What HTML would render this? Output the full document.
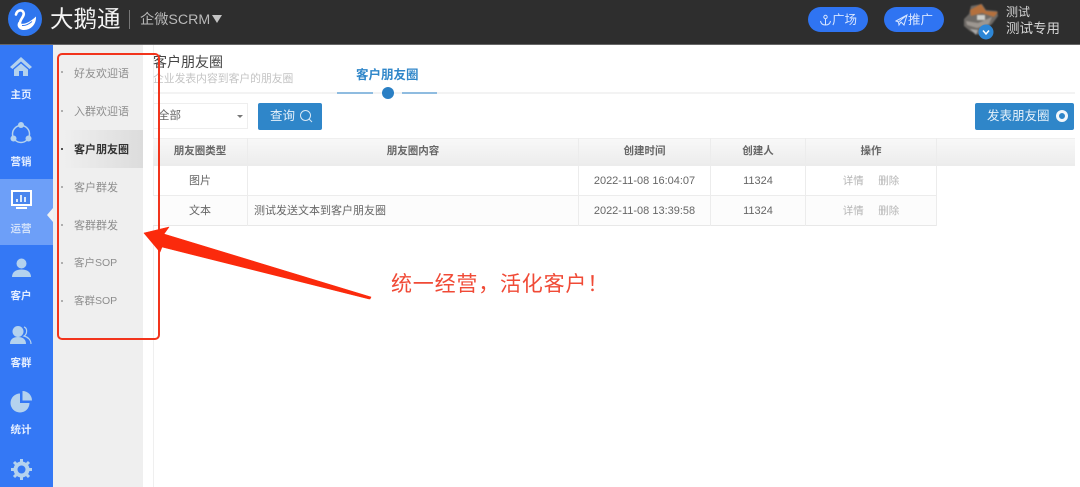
<!DOCTYPE html>
<html lang="zh"><head><meta charset="utf-8"><title>客户朋友圈</title>
<style>
html,body{margin:0;padding:0;width:1080px;height:487px;overflow:hidden;background:#fff}
body{position:relative;font-family:"Liberation Sans","Noto Sans CJK SC",sans-serif;color:#666}
.a{position:absolute;white-space:nowrap}
.t{line-height:1;text-align:center;filter:blur(.35px)}
.side{color:#e4eeff;font-size:10.5px;font-weight:bold;width:42px;left:0;text-align:center;line-height:1;filter:blur(.3px)}
.sub{left:74px;font-size:11px;line-height:1;color:#8d8d8d;filter:blur(.35px)}
.dot{left:61px;width:2px;height:2px;border-radius:50%;background:#999}
.cell{position:absolute;box-sizing:border-box;border-right:1px solid #ececec;font-size:11px;color:#666;text-align:center;filter:blur(.3px)}
.h{top:138px;height:28px;line-height:27px;font-size:10.5px;font-weight:bold;color:#666}
.r1{top:166px;height:30px;line-height:31px}
.r2{top:196px;height:30px;line-height:31px}
.op{color:#b5b5b5;font-size:10.5px}
</style></head><body>

<!-- header -->
<div class="a" style="left:0;top:0;width:1080px;height:45px;background:#2e2e2e;border-bottom:1px solid #666;box-sizing:border-box"></div>
<svg class="a" style="left:8px;top:2px" width="34" height="34" viewBox="0 0 34 34">
<circle cx="17" cy="17" r="17" fill="#2f76ee"/>
<path d="M8 12.500C9 8 14 7 15.500 10.500C17 14 12 17 12 21" fill="none" stroke="#fff" stroke-width="2.600" stroke-linecap="round"/>
<path d="M11 20C14 24 21 21 28 14.500C28.500 22 23 28 16 28C11 28 8 24 10.500 20z" fill="#fff"/>
<path d="M14 23.500C18 24 21 22 24 19.500" fill="none" stroke="#2f76ee" stroke-width="1"/>
</svg>
<div class="a t" style="left:50px;top:8px;font-size:23.500px;color:#f4f4f4">大鹅通</div>
<div class="a" style="left:129px;top:10px;width:1px;height:19px;background:#777"></div>
<div class="a t" style="left:140px;top:13px;font-size:14.200px;color:#b9b9b9">企微SCRM</div>
<div class="a" style="left:212px;top:15px;width:0;height:0;border-left:5.500px solid transparent;border-right:5.500px solid transparent;border-top:8px solid #c4c4c4"></div>

<div class="a" style="left:808px;top:7px;width:60px;height:25px;border-radius:13px;background:#2f74f2"></div>
<svg class="a" style="left:819px;top:14px" width="13" height="13" viewBox="0 0 13 13"><circle cx="6.500" cy="3" r="1.700" fill="none" stroke="#d8e6ff"/><path d="M6.500 5V11M1.500 7C2 10 4 11 6.500 11S11 10 11.500 7" fill="none" stroke="#d8e6ff"/></svg>
<div class="a t" style="left:832px;top:14px;font-size:12.500px;color:#d8e6ff">广场</div>
<div class="a" style="left:884px;top:7px;width:60px;height:25px;border-radius:13px;background:#2f74f2"></div>
<svg class="a" style="left:895px;top:14px" width="13" height="13" viewBox="0 0 13 13"><path d="M1 7 12 1 9 11 6 8 4 11 3.500 8zM3.500 8 12 1" fill="none" stroke="#d8e6ff" stroke-width="1"/></svg>
<div class="a t" style="left:908px;top:14px;font-size:12.500px;color:#d8e6ff">推广</div>

<svg class="a" style="left:962px;top:2px" width="38" height="38" viewBox="0 0 38 38">
<g style="filter:blur(.7px)">
<path d="M2 17 7 12 9 4 20 2 24 8 35 9 36 14 30 22 22 28 17 33 8 29 2 24z" fill="#6e6a66"/>
<path d="M8 8 19 2 24 9 36 10 32 15 20 11 9 14z" fill="#b4703d"/>
<path d="M4 19 16 21 30 15 27 22 15 26 5 23z" fill="#9d9791"/>
<rect x="15" y="13" width="8" height="5" fill="#cfcfca"/>
<path d="M8 27 16 28 14 33z" fill="#a8a8a8"/>
</g>
<circle cx="24" cy="30" r="7.500" fill="#2d86d6"/>
<path d="M21 28.500 24 32 27 28.500" fill="none" stroke="#fff" stroke-width="1.500"/>
</svg>
<div class="a t" style="left:1006px;top:6px;font-size:12px;color:#d4d4d4">测试</div>
<div class="a t" style="left:1006px;top:22px;font-size:13.500px;color:#d4d4d4">测试专用</div>

<!-- blue rail -->
<div class="a" style="left:0;top:45px;width:53px;height:442px;background:#3478f5"></div>
<div class="a" style="left:0;top:179px;width:53px;height:66px;background:#6d9ff8"></div>
<div class="a" style="left:47px;top:208px;width:0;height:0;border-top:7px solid transparent;border-bottom:7px solid transparent;border-right:6px solid #f2f2f2"></div>

<svg class="a" style="left:9px;top:56px" width="24" height="21" viewBox="0 0 24 21"><path d="M1 11 12 1 23 11 20.500 13 12 5.500 3.500 13z M5 13.500 12 7.500 19 13.500V20H14V15H10V20H5z" fill="#b4d2ee"/></svg>
<div class="a side" style="top:90px">主页</div>

<svg class="a" style="left:9px;top:121px" width="24" height="24" viewBox="0 0 24 24"><circle cx="12" cy="13" r="8.500" fill="none" stroke="#b4d2ee" stroke-width="1.500"/><circle cx="12" cy="4" r="3" fill="#b4d2ee"/><circle cx="4.500" cy="17.500" r="3" fill="#b4d2ee"/><circle cx="19.500" cy="17.500" r="3" fill="#b4d2ee"/></svg>
<div class="a side" style="top:157px">营销</div>

<svg class="a" style="left:11px;top:190px" width="21" height="20" viewBox="0 0 21 20"><rect x="1" y="1" width="19" height="14" fill="#4a86ee" stroke="#fff" stroke-width="2"/><path d="M5 12V9h2v3zM9 12V5h2v7zM13 12V7h2v5z" fill="#d9e7fb"/><path d="M5 18h11" stroke="#fff" stroke-width="2"/></svg>
<div class="a side" style="top:224px;color:#cfe0fb">运营</div>

<svg class="a" style="left:12px;top:258px" width="19" height="19" viewBox="0 0 19 19"><circle cx="9.500" cy="5.500" r="5" fill="#b4d2ee"/><path d="M0 19c0-5 4-7.500 9.500-7.500S19 14 19 19z" fill="#b4d2ee"/></svg>
<div class="a side" style="top:291px">客户</div>

<svg class="a" style="left:10px;top:326px" width="23" height="19" viewBox="0 0 23 19"><circle cx="8" cy="5.500" r="5.500" fill="#b4d2ee"/><path d="M0 18c0-5 3.500-7 8-7s8 2 8 7z" fill="#b4d2ee"/><path d="M14 1c3.500 1 3.500 7 0 9 4 1 7 4 7 8" fill="none" stroke="#b4d2ee" stroke-width="1.200"/></svg>
<div class="a side" style="top:358px">客群</div>

<svg class="a" style="left:10px;top:390px" width="23" height="23" viewBox="0 0 23 23"><path d="M10 3.500V13h9.500A9.500 9.500 0 1 1 10 3.500z" fill="#b4d2ee"/><path d="M12.500 1A9.500 9.500 0 0 1 22 10.500H12.500z" fill="#b4d2ee"/></svg>
<div class="a side" style="top:425px">统计</div>

<svg class="a" style="left:11px;top:459px" width="21" height="21" viewBox="0 0 21 21"><circle cx="10.500" cy="10.500" r="6" fill="none" stroke="#b4d2ee" stroke-width="4"/><path d="M10.500 0v4M10.500 17v4M0 10.500h4M17 10.500h4M3 3l3 3M15 15l3 3M18 3l-3 3M6 15l-3 3" stroke="#b4d2ee" stroke-width="3"/></svg>

<!-- submenu -->
<div class="a" style="left:53px;top:45px;width:90px;height:442px;background:#efefef"></div>
<div class="a" style="left:64px;top:130px;width:79px;height:38px;background:linear-gradient(90deg,#efefef,#dcdcdc)"></div>
<div class="a" style="left:153px;top:45px;width:1px;height:442px;background:#efefef"></div>
<div class="a dot" style="top:71px"></div><div class="a sub" style="top:69px">好友欢迎语</div>
<div class="a dot" style="top:110px"></div><div class="a sub" style="top:107px">入群欢迎语</div>
<div class="a dot" style="top:148px;background:#222"></div><div class="a sub" style="top:145px;color:#333;font-weight:bold">客户朋友圈</div>
<div class="a dot" style="top:186px"></div><div class="a sub" style="top:183px">客户群发</div>
<div class="a dot" style="top:224px"></div><div class="a sub" style="top:221px">客群群发</div>
<div class="a dot" style="top:262px"></div><div class="a sub" style="top:258px;font-size:10.500px">客户SOP</div>
<div class="a dot" style="top:300px"></div><div class="a sub" style="top:296px;font-size:10.500px">客群SOP</div>

<!-- page head -->
<div class="a t" style="left:153px;top:55px;font-size:14px;color:#444">客户朋友圈</div>
<div class="a t" style="left:153px;top:74px;font-size:10.800px;color:#c4c4c4">企业发表内容到客户的朋友圈</div>
<div class="a t" style="left:356px;top:69px;font-size:12.500px;font-weight:bold;color:#2f86c9">客户朋友圈</div>
<div class="a" style="left:153px;top:92px;width:922px;height:2px;background:#f3f3f3"></div>
<div class="a" style="left:337px;top:92px;width:36px;height:2px;background:#8fbce0"></div>
<div class="a" style="left:402px;top:92px;width:35px;height:2px;background:#8fbce0"></div>
<div class="a" style="left:382px;top:87px;width:12px;height:12px;border-radius:50%;background:#2a7fc4"></div>

<!-- filters -->
<div class="a" style="left:153px;top:103px;width:95px;height:26px;box-sizing:border-box;border:1px solid #eee"></div>
<div class="a t" style="left:158px;top:111px;font-size:11.500px;color:#666">全部</div>
<div class="a" style="left:237px;top:115px;width:0;height:0;border-left:3px solid transparent;border-right:3px solid transparent;border-top:3px solid #777"></div>
<div class="a" style="left:258px;top:103px;width:64px;height:27px;background:#2f86c9;border-radius:2px"></div>
<div class="a t" style="left:270px;top:110px;font-size:12.500px;color:#e6f1fa">查询</div>
<svg class="a" style="left:299px;top:109px" width="14" height="14" viewBox="0 0 14 14"><circle cx="6.500" cy="6.500" r="5" fill="none" stroke="#d8e9f6" stroke-width="1"/><path d="M10 10l3 3" stroke="#d8e9f6"/></svg>
<div class="a" style="left:975px;top:103px;width:99px;height:27px;background:#2f86c9;border-radius:2px"></div>
<div class="a t" style="left:987px;top:110px;font-size:12.500px;color:#e6f1fa">发表朋友圈</div>
<div class="a" style="left:1056px;top:110px;width:12px;height:12px;box-sizing:border-box;border:3px solid #f2f7fb;border-radius:50%"></div>

<!-- table -->
<div class="a" style="left:153px;top:138px;width:922px;height:28px;background:linear-gradient(#f8f8f8,#ececec);border-top:1px solid #efefef;box-sizing:border-box"></div>
<div class="cell h" style="left:153px;width:95px">朋友圈类型</div>
<div class="cell h" style="left:248px;width:331px">朋友圈内容</div>
<div class="cell h" style="left:579px;width:132px">创建时间</div>
<div class="cell h" style="left:711px;width:95px">创建人</div>
<div class="cell h" style="left:806px;width:131px">操作</div>

<div class="a" style="left:153px;top:195px;width:784px;height:1px;background:#ececec"></div>
<div class="a" style="left:153px;top:225px;width:784px;height:1px;background:#e8e8e8"></div>
<div class="a" style="left:153px;top:196px;width:784px;height:29px;background:#fcfcfc"></div>
<div class="cell r1" style="left:153px;width:95px">图片</div>
<div class="cell r1" style="left:248px;width:331px"></div>
<div class="cell r1" style="left:579px;width:132px">2022-11-08 16:04:07</div>
<div class="cell r1" style="left:711px;width:95px">11324</div>
<div class="cell r1 op" style="left:806px;width:131px">详情&nbsp;&nbsp;&nbsp;&nbsp;&nbsp;删除</div>

<div class="cell r2" style="left:153px;width:95px">文本</div>
<div class="cell r2" style="left:248px;width:331px;text-align:left;padding-left:6px">测试发送文本到客户朋友圈</div>
<div class="cell r2" style="left:579px;width:132px">2022-11-08 13:39:58</div>
<div class="cell r2" style="left:711px;width:95px">11324</div>
<div class="cell r2 op" style="left:806px;width:131px">详情&nbsp;&nbsp;&nbsp;&nbsp;&nbsp;删除</div>

<!-- annotations -->
<div class="a" style="left:57px;top:53px;width:103px;height:287px;box-sizing:border-box;border:2px solid #f2341c;border-radius:5px"></div>
<svg class="a" style="left:140px;top:220px" width="240" height="90" viewBox="0 0 240 90">
<path d="M4 13 29 7 24 14 231 77 230 79 229 79 22 27 20 32z" fill="#fb2a0c" stroke="#fb2a0c" stroke-width=".6" stroke-linejoin="round"/>
</svg>
<div class="a t" style="left:391px;top:274px;font-size:21px;color:#f04a36;letter-spacing:.8px">统一经营，活化客户！</div>
</body></html>
